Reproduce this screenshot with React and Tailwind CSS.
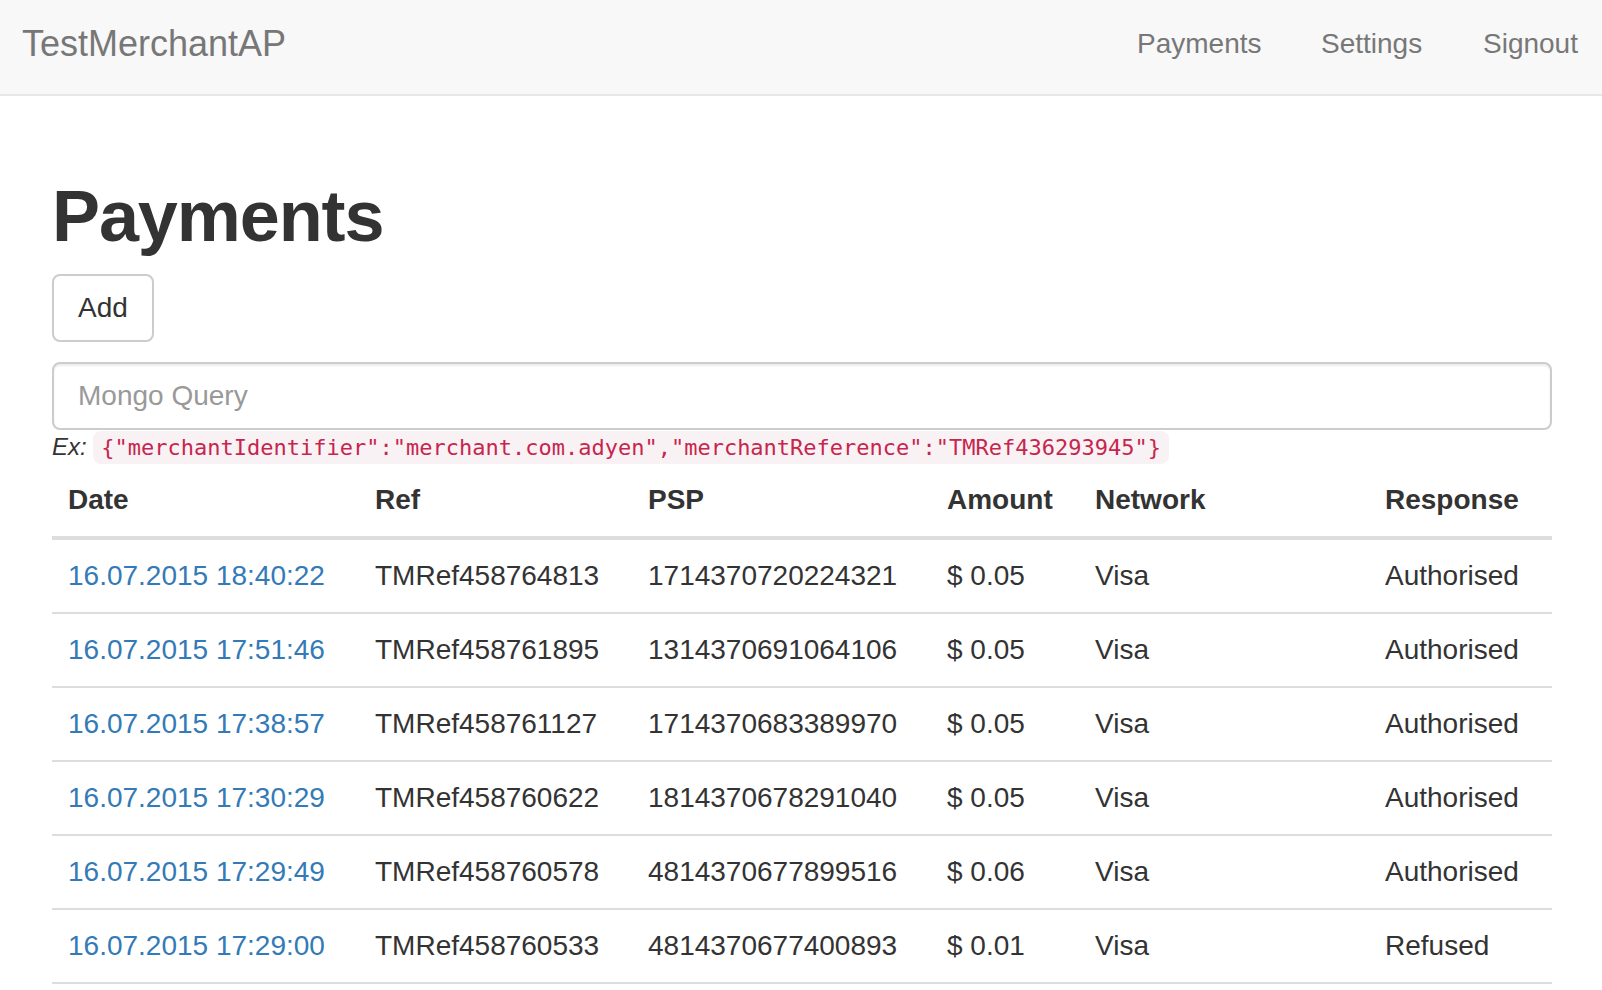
import React from "react";

const rows = [
  ["16.07.2015 18:40:22", "TMRef458764813", "1714370720224321", "$ 0.05", "Visa", "Authorised"],
  ["16.07.2015 17:51:46", "TMRef458761895", "1314370691064106", "$ 0.05", "Visa", "Authorised"],
  ["16.07.2015 17:38:57", "TMRef458761127", "1714370683389970", "$ 0.05", "Visa", "Authorised"],
  ["16.07.2015 17:30:29", "TMRef458760622", "1814370678291040", "$ 0.05", "Visa", "Authorised"],
  ["16.07.2015 17:29:49", "TMRef458760578", "4814370677899516", "$ 0.06", "Visa", "Authorised"],
  ["16.07.2015 17:29:00", "TMRef458760533", "4814370677400893", "$ 0.01", "Visa", "Refused"],
];

const widths = ["w-[307px]", "w-[273px]", "w-[299px]", "w-[148px]", "w-[290px]", "w-[183px]"];

export default function App() {
  return (
    <div className="min-h-screen bg-white font-['Liberation_Sans',Arial,sans-serif] text-[28px] leading-[40px] text-[#333]">
      <nav className="flex h-[96px] justify-between border-b-2 border-[#e7e7e7] bg-[#f8f8f8]">
        <a href="#" className="pl-[22px] pt-[24px] text-[36px] leading-[40px] text-[#777]">
          TestMerchantAP
        </a>
        <ul className="flex pt-[24px] text-[28px] leading-[40px] text-[#777]">
          <li className="w-[184px]"><a href="#">Payments</a></li>
          <li className="w-[162px]"><a href="#">Settings</a></li>
          <li className="w-[119px]"><a href="#">Signout</a></li>
        </ul>
      </nav>

      <main className="pl-[52px] pr-[50px] pt-[81px]">
        <h1 className="mb-[18px] text-[72px] font-bold leading-[79px] tracking-[-1.1px] text-[#333]">
          Payments
        </h1>
        <button className="h-[68px] rounded-[8px] border-2 border-[#ccc] bg-white px-[24px] text-[28px] leading-[40px] text-[#333]">
          Add
        </button>
        <input
          type="text"
          placeholder="Mongo Query"
          className="mt-[20px] block h-[68px] w-full rounded-[8px] border-2 border-[#ccc] px-[24px] text-[28px] text-[#555] shadow-[inset_0_2px_2px_rgba(0,0,0,0.075)] outline-none placeholder:text-[#999]"
        />
        <div className="h-[34px] text-[24px] leading-[34px]">
          <i>Ex:</i>{" "}
          <code className="rounded-[8px] bg-[#f9f2f4] px-[8px] py-[4px] font-['DejaVu_Sans_Mono',monospace] text-[22px] text-[#c7254e]">
            {'{"merchantIdentifier":"merchant.com.adyen","merchantReference":"TMRef436293945"}'}
          </code>
        </div>

        <table className="w-full table-fixed border-collapse text-left">
          <colgroup>
            {widths.map((w, i) => (
              <col key={i} className={w} />
            ))}
          </colgroup>
          <thead>
            <tr className="border-b-4 border-[#ddd]">
              {["Date", "Ref", "PSP", "Amount", "Network", "Response"].map((h) => (
                <th key={h} className="p-[16px] font-bold">
                  {h}
                </th>
              ))}
            </tr>
          </thead>
          <tbody>
            {rows.map((r) => (
              <tr key={r[1]} className="border-b-2 border-[#ddd]">
                <td className="p-[16px]">
                  <a href="#" className="text-[#337ab7]">{r[0]}</a>
                </td>
                {r.slice(1).map((c, i) => (
                  <td key={i} className="p-[16px]">{c}</td>
                ))}
              </tr>
            ))}
          </tbody>
        </table>
      </main>
    </div>
  );
}
